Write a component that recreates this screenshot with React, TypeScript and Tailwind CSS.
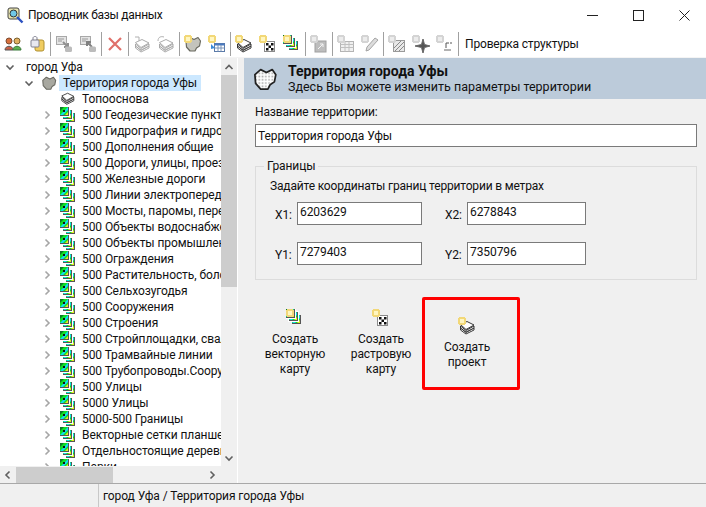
import React from "react";

const font = { fontFamily: 'Roboto, "Noto Sans", sans-serif' };

function Star({ gray = false }: { gray?: boolean }) {
  const c = gray ? "#d4d4d4" : "#f2d878";
  const d = gray ? "#ececec" : "#fff6c0";
  return (
    <g>
      <rect x="0" y="1" width="8" height="6" fill={c} />
      <rect x="1" y="0" width="6" height="8" fill={c} />
      <rect x="2" y="2" width="4" height="4" fill={d} />
    </g>
  );
}

function Box({ children }: { children: React.ReactNode }) {
  return (
    <svg width="18" height="18" viewBox="0 0 18 18" className="shrink-0">
      {children}
    </svg>
  );
}

function Stack({ color = "#222", x = 2, y = 4 }: { color?: string; x?: number; y?: number }) {
  return (
    <g transform={`translate(${x} ${y})`} fill="#fff" stroke={color} strokeWidth="0.9">
      <path d="M0.5 7 L6 11.5 L14 7 L14 9 L6 13 L0.5 9 Z" />
      <path d="M0.5 5 L6 9.5 L14 5 L14 7 L6 11 L0.5 7 Z" />
      <path d="M0.5 3.5 L7 0.5 L14 4 L6 8.5 Z" />
    </g>
  );
}

function Blob({ fill, stroke }: { fill: string; stroke: string }) {
  return (
    <path
      d="M2 6 L6 2.5 L10 4.5 L14 2.5 L16.5 6 L15.5 11 L12.5 13 L11 16 L6 16 L2.5 12 Z"
      fill={fill}
      stroke={stroke}
      strokeWidth="1.2"
      strokeLinejoin="round"
    />
  );
}

function Checker({ gray = false }: { gray?: boolean }) {
  const dark = gray ? "#888" : "#111";
  return (
    <g>
      <rect x="5.5" y="6.5" width="10" height="10" fill="#fff" stroke="#8a8a8a" />
      <rect x="7" y="8" width="2.5" height="2.5" fill={dark} />
      <rect x="12" y="8" width="2.5" height="2.5" fill={dark} />
      <rect x="9.5" y="10.5" width="2.5" height="2.5" fill={dark} />
      <rect x="7" y="13" width="2.5" height="2.5" fill={dark} />
      <rect x="12" y="13" width="2.5" height="2.5" fill={dark} />
    </g>
  );
}

function Sheet({ x, y }: { x: number; y: number }) {
  return (
    <g transform={`translate(${x} ${y})`}>
      <rect width="9" height="9" fill="#555" />
      <rect x="0" y="0" width="8" height="8" fill="#0ee024" />
      <path d="M0 8 L8 0 V3 L3 8 Z" fill="#10dcf0" />
      <path d="M0 0 H4 L0 4 Z" fill="#0a7a26" />
      <rect x="3" y="3" width="2" height="2" fill="#111" />
      <path d="M5 8 L8 5 V8 Z" fill="#e8e820" />
    </g>
  );
}

function Layers({ star = false }: { star?: boolean }) {
  return (
    <svg width="18" height="18" viewBox="0 0 18 18" className="shrink-0">
      <Sheet x={6} y={6} />
      <rect x="2" y="2" width="11" height="11" fill="#fff" />
      <Sheet x={3} y={3} />
      <rect x="0" y="0" width="10" height="10" fill="#fff" />
      <Sheet x={0} y={0} />
      {star && <Star />}
    </svg>
  );
}

const I = {
  users: (
    <Box>
      <circle cx="5" cy="6" r="3" fill="#d8703c" stroke="#7a4a30" />
      <path d="M1 15 C1 10 9 10 9 15 Z" fill="#c86048" stroke="#555" />
      <circle cx="13" cy="6" r="3" fill="#e0b060" stroke="#7a6030" />
      <path d="M9 15 C9 10 17 10 17 15 Z" fill="#5cb050" stroke="#3a7a3a" />
    </Box>
  ),
  lock: (
    <Box>
      <rect x="7" y="5" width="9" height="11" rx="2" fill="#f0cc60" stroke="#b09030" />
      <rect x="3" y="5" width="8" height="7" rx="1" fill="#e8e8f0" stroke="#808090" />
      <path d="M5 5 V3 C5 1 9 1 9 3 V5" fill="none" stroke="#808090" />
    </Box>
  ),
  docIn: (
    <Box>
      <rect x="1.5" y="1.5" width="10" height="8" fill="#e4e4e4" stroke="#a8a8a8" />
      <path d="M3 4 H9 M3 6 H7" stroke="#9a9a9a" />
      <path d="M8 7 L13 12 M13 8 V12 H9" stroke="#909090" strokeWidth="2" fill="none" />
      <rect x="10" y="11.5" width="7" height="5.5" rx="1.5" fill="#bcbcbc" />
    </Box>
  ),
  docOut: (
    <Box>
      <rect x="1.5" y="1.5" width="10" height="8" fill="#e4e4e4" stroke="#a8a8a8" />
      <path d="M3 4 H9 M3 6 H7" stroke="#9a9a9a" />
      <path d="M13 12 L8 7 M8 11 V7 H12" stroke="#808080" strokeWidth="2" fill="none" />
      <rect x="10" y="11.5" width="7" height="5.5" rx="1.5" fill="#bcbcbc" />
    </Box>
  ),
  x: (
    <Box>
      <path d="M3 3 L15 15 M15 3 L3 15" stroke="#e0706a" strokeWidth="2.2" />
    </Box>
  ),
  stackA: (
    <Box>
      <Stack color="#a0a0a0" />
      <path d="M2 2 L6 2 L6 6" fill="none" stroke="#b0b0b0" />
    </Box>
  ),
  stackB: (
    <Box>
      <Stack color="#a0a0a0" />
      <path d="M1 6 C1 2 4 1 7 2" fill="none" stroke="#b0b0b0" />
    </Box>
  ),
  starBlob: (
    <Box>
      <Blob fill="#c4c4bc" stroke="#6a6a60" />
      <Star />
    </Box>
  ),
  starTable: (
    <Box>
      <rect x="6.5" y="8.5" width="10" height="8" fill="#fff" stroke="#5a7aa8" />
      <rect x="6.5" y="8.5" width="10" height="2" fill="#4a7ac0" />
      <path d="M6.5 13 H16.5 M10 10 V16.5 M13 10 V16.5" stroke="#7a94b8" />
      <path d="M3 9 L7 13 L3 14 Z" fill="#3a8ad8" />
      <Star />
    </Box>
  ),
  starStack: (
    <Box>
      <Stack />
      <Star />
    </Box>
  ),
  starChecker: (
    <Box>
      <Checker />
      <Star />
    </Box>
  ),
  starBoxGray: (
    <Box>
      <rect x="5" y="6" width="11" height="11" fill="#bdbdbd" stroke="#a0a0a0" />
      <path d="M8 14 L13 9 M10 9 H13 V12" stroke="#f4f4f4" fill="none" />
      <Star gray />
    </Box>
  ),
  table: (
    <Box>
      <rect x="3.5" y="6.5" width="13" height="10" fill="#f0f0f0" stroke="#b4b4b4" />
      <path d="M3.5 9.5 H16.5 M3.5 12.5 H16.5 M8 6.5 V16.5 M12 6.5 V16.5" stroke="#c0c0c0" />
      <Star gray />
    </Box>
  ),
  pencil: (
    <Box>
      <path d="M5 16 L6 12 L14 3 L17 5 L8 15 Z" fill="#dcdcdc" stroke="#a4a4a4" />
      <Star gray />
    </Box>
  ),
  hatch: (
    <Box>
      <rect x="5.5" y="5.5" width="11" height="11" fill="#e8e8e8" stroke="#9a9a9a" />
      <path d="M6 13 L13 6 M7 16 L16 7 M11 16 L16 11" stroke="#8a8a8a" />
      <Star gray />
    </Box>
  ),
  cross: (
    <Box>
      <path d="M11 4 L12.5 9.5 L18 11 L12.5 12.5 L11 18 L9.5 12.5 L3 11 L9.5 9.5 Z" fill="#555" stroke="#666" />
      <Star gray />
    </Box>
  ),
  gamma: (
    <Box>
      <path d="M8 15 H15" stroke="#666" />
      <path d="M10 13 V8 H13 M15 7 V9" stroke="#555" fill="none" />
      <Star gray />
    </Box>
  ),
};

function Sep() {
  return <div className="mx-px h-[24px] w-px shrink-0 bg-[#a0a0a0]" />;
}

function Tool({ icon }: { icon: React.ReactNode }) {
  return <div className="flex h-[24px] w-[24px] shrink-0 items-center justify-center">{icon}</div>;
}

function Chevron({ dir, color = "#606060", size = 10 }: { dir: "u" | "d" | "l" | "r"; color?: string; size?: number }) {
  const d = {
    u: "M1.5 7 L5 3.5 L8.5 7",
    d: "M1.5 3.5 L5 7 L8.5 3.5",
    l: "M6.5 1.5 L3 5 L6.5 8.5",
    r: "M3.5 1.5 L7 5 L3.5 8.5",
  }[dir];
  return (
    <svg width={size} height={size} viewBox="0 0 10 10" className="shrink-0">
      <path d={d} fill="none" stroke={color} strokeWidth="1.6" />
    </svg>
  );
}

const layers = [
  "500 Геодезические пункты",
  "500 Гидрография и гидротехнические",
  "500 Дополнения общие",
  "500 Дороги, улицы, проезды",
  "500 Железные дороги",
  "500 Линии электропередачи",
  "500 Мосты, паромы, переправы",
  "500 Объекты водоснабжения",
  "500 Объекты промышленности",
  "500 Ограждения",
  "500 Растительность, болота",
  "500 Сельхозугодья",
  "500 Сооружения",
  "500 Строения",
  "500 Стройплощадки, свалки",
  "500 Трамвайные линии",
  "500 Трубопроводы.Сооружения",
  "500 Улицы",
  "5000 Улицы",
  "5000-500 Границы",
  "Векторные сетки планшетов",
  "Отдельностоящие деревья",
  "Парки",
];

function CoordField({ label, value, w, ml }: { label: string; value: string; w: string; ml: string }) {
  return (
    <div className={`flex items-center ${ml}`}>
      <span className="w-[22px] pt-[3px] leading-[16px] text-[#111]">{label}</span>
      <div className={`h-[23px] ${w} border border-[#7a7a7a] bg-white pl-[2px] leading-[19px] text-[#111]`}>
        {value}
      </div>
    </div>
  );
}

function BigButton({ icon, lines, className }: { icon: React.ReactNode; lines: string[]; className: string }) {
  return (
    <div className={`flex flex-col items-center text-center leading-[15px] text-[#111] ${className}`}>
      {icon}
      <div className="mt-[5px]">
        {lines.map((l) => (
          <div key={l}>{l}</div>
        ))}
      </div>
    </div>
  );
}

export default function App() {
  return (
    <div style={font} className="flex h-[507px] w-[706px] flex-col overflow-hidden bg-[#f0f0f0] text-[12px] tracking-[-0.08px] text-[#111]">
      {/* Title bar */}
      <div className="flex h-[30px] shrink-0 items-center bg-white pl-[7px]">
        <svg width="17" height="17" viewBox="0 0 17 17" className="shrink-0">
          <rect x="1" y="1" width="11" height="11" rx="2" fill="#e8e4b0" stroke="#444" />
          <circle cx="6.5" cy="6.5" r="3.5" fill="#70c8e8" stroke="#333" />
          <path d="M10 10 L15.5 15.5" stroke="#2a50c0" strokeWidth="2.4" />
        </svg>
        <span className="ml-[4px] tracking-[-0.28px]">Проводник базы данных</span>
        <div className="ml-auto flex items-center pr-[16px]">
          <svg width="11" height="11" viewBox="0 0 11 11" className="mr-[35px]">
            <path d="M0 5.5 H11" stroke="#222" />
          </svg>
          <svg width="11" height="11" viewBox="0 0 11 11" className="mr-[35px]">
            <rect x="0.5" y="0.5" width="10" height="10" fill="none" stroke="#222" />
          </svg>
          <svg width="11" height="11" viewBox="0 0 11 11">
            <path d="M0.5 0.5 L10.5 10.5 M10.5 0.5 L0.5 10.5" stroke="#222" />
          </svg>
        </div>
      </div>

      {/* Toolbar */}
      <div className="flex h-[28px] shrink-0 items-center border-b border-[#f4f4f4] bg-white pl-px">
        <Tool icon={I.users} />
        <Tool icon={I.lock} />
        <Sep />
        <Tool icon={I.docIn} />
        <Tool icon={I.docOut} />
        <Sep />
        <Tool icon={I.x} />
        <Sep />
        <Tool icon={I.stackA} />
        <Tool icon={I.stackB} />
        <Sep />
        <Tool icon={I.starBlob} />
        <Tool icon={I.starTable} />
        <Sep />
        <Tool icon={I.starStack} />
        <Tool icon={I.starChecker} />
        <Tool icon={<Layers star />} />
        <Sep />
        <Tool icon={I.starBoxGray} />
        <Sep />
        <Tool icon={I.table} />
        <Tool icon={I.pencil} />
        <Sep />
        <Tool icon={I.hatch} />
        <Tool icon={I.cross} />
        <Tool icon={I.gamma} />
        <Sep />
        <span className="ml-[5px] tracking-[-0.16px]">Проверка структуры</span>
      </div>

      {/* Main */}
      <div className="flex min-h-0 flex-1">
        {/* Left */}
        <div className="flex w-[237px] shrink-0 flex-col pt-px">
          <div className="flex min-h-0 flex-1">
            <div className="w-[221px] overflow-hidden bg-white">
              <div className="flex h-[16px] items-center pl-[5px]">
                <Chevron dir="d" size={10} />
                <span className="ml-[11px] whitespace-nowrap">город Уфа</span>
              </div>
              <div className="flex h-[16px] items-center pl-[24px]">
                <Chevron dir="d" size={10} />
                <svg width="16" height="16" viewBox="0 0 18 18" className="ml-[7px] shrink-0">
                  <Blob fill="#a8a8a0" stroke="#6a6a62" />
                </svg>
                <span className="ml-[2px] flex h-[16px] w-[142px] items-center bg-[#cce8ff] pl-[4px] whitespace-nowrap">
                  Территория города Уфы
                </span>
              </div>
              <div className="flex h-[16px] items-center pl-[60px]">
                <svg width="17" height="16" viewBox="0 0 18 18" className="shrink-0">
                  <Stack x={1} y={2} />
                </svg>
                <span className="ml-[5px] whitespace-nowrap">Топооснова</span>
              </div>
              {layers.map((l) => (
                <div key={l} className="flex h-[16px] items-center pl-[42px]">
                  <Chevron dir="r" color="#a6a6a6" size={10} />
                  <span className="ml-[8px] flex h-[16px] items-start">
                    <Layers />
                  </span>
                  <span className="ml-[4px] whitespace-nowrap">{l}</span>
                </div>
              ))}
            </div>
            {/* Vertical scrollbar */}
            <div className="flex w-[16px] shrink-0 flex-col items-center bg-[#f0f0f0]">
              <div className="flex h-[16px] items-center justify-center">
                <Chevron dir="u" />
              </div>
              <div className="w-full flex-none basis-[212px] bg-[#cdcdcd]" />
              <div className="flex-1" />
              <div className="flex h-[16px] items-center justify-center">
                <Chevron dir="d" />
              </div>
            </div>
          </div>
          {/* Horizontal scrollbar */}
          <div className="flex h-[17px] shrink-0 items-center">
            <div className="flex w-[16px] items-center justify-center">
              <Chevron dir="l" />
            </div>
            <div className="h-[16px] w-[97px] bg-[#cdcdcd]" />
            <div className="ml-auto mr-[20px]">
              <Chevron dir="r" />
            </div>
          </div>
        </div>

        {/* Splitter */}
        <div className="w-[7px] shrink-0 border-l border-white bg-[#f0f0f0]" />

        {/* Right */}
        <div className="min-w-0 flex-1">
          <div className="flex h-[41px] items-center bg-[#bccbda] pl-[8px]">
            <svg width="26" height="26" viewBox="0 0 18 18" className="shrink-0">
              <pattern id="dots" width="1" height="1" patternUnits="userSpaceOnUse">
                <rect width="1" height="1" fill="#fff" />
                <rect width="0.5" height="0.5" fill="#aaa" />
              </pattern>
              <Blob fill="url(#dots)" stroke="#222" />
            </svg>
            <div className="ml-[10px] leading-[16px] tracking-normal text-[#111]">
              <div className="text-[14px] font-bold">Территория города Уфы</div>
              <div className="text-[12.5px]">Здесь Вы можете изменить параметры территории</div>
            </div>
          </div>

          <div className="pl-[11px] pr-[9px] pt-[5px]">
            <div className="leading-[16px] tracking-[-0.16px]">Название территории:</div>
            <div className="mt-[4px] flex h-[23px] items-center border border-[#7a7a7a] bg-white pl-[2px]">
              Территория города Уфы
            </div>

            <div className="relative mt-[19px] h-[114px] border border-[#dcdcdc] pl-[14px] pt-[11px]">
              <span className="absolute -top-[9px] left-[8px] bg-[#f0f0f0] px-[3px] leading-[16px]">Границы</span>
              <div className="leading-[16px] tracking-[-0.17px]">Задайте координаты границ территории в метрах</div>
              <div className="mt-[8px] flex pl-[5px]">
                <CoordField label="X1:" value="6203629" w="w-[125px]" ml="" />
                <CoordField label="X2:" value="6278843" w="w-[119px]" ml="ml-[23px]" />
              </div>
              <div className="mt-[17px] flex pl-[5px]">
                <CoordField label="Y1:" value="7279403" w="w-[125px]" ml="" />
                <CoordField label="Y2:" value="7350796" w="w-[119px]" ml="ml-[23px]" />
              </div>
            </div>
          </div>

          <div className="flex items-start pl-[8px] pt-[17px]">
            <BigButton className="w-[86px] pt-[12px]" icon={<Layers star />} lines={["Создать", "векторную", "карту"]} />
            <BigButton className="w-[86px] pt-[12px]" icon={I.starChecker} lines={["Создать", "растровую", "карту"]} />
            <BigButton
              className="-ml-[2px] h-[93px] w-[98px] rounded-[2px] border-[3px] border-[#ff0000] pr-[8px] pt-[17px]"
              icon={I.starStack}
              lines={["Создать", "проект"]}
            />
          </div>
        </div>
      </div>

      {/* Status bar */}
      <div className="flex h-[24px] shrink-0 items-center border-t border-[#a8a8a8] bg-[#f0f0f0]">
        <div className="h-full w-[99px] border-r border-[#c8c8c8]" />
        <span className="ml-[4px]">город Уфа / Территория города Уфы</span>
      </div>
    </div>
  );
}
